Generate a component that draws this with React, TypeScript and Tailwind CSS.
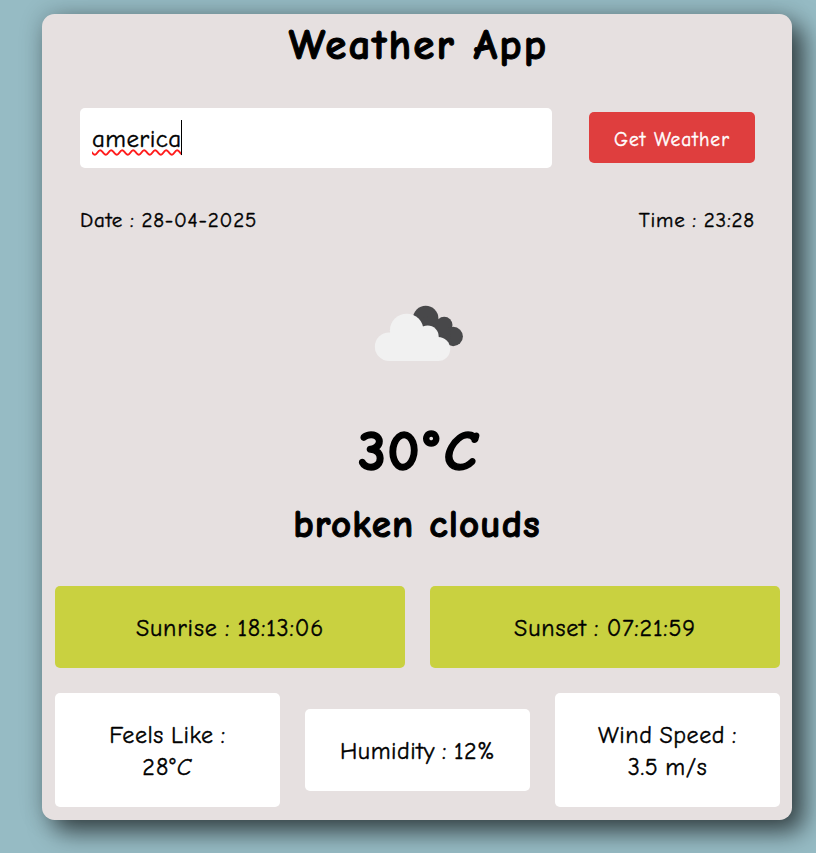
import React from "react";

function CloudIcon() {
  return (
    <svg width="125" height="125" viewBox="0.8 0 125 125" className="block" aria-label="broken clouds">
      <g fill="#48484a">
        <circle cx="71.500" cy="46.500" r="12.700" />
        <circle cx="90" cy="53" r="8.300" />
        <circle cx="99" cy="64.500" r="9.700" />
        <path d="M60 48L78 44L84 47L96 58L97 72L85 72Z" />
      </g>
      <g fill="#f1f1f1">
        <circle cx="35" cy="74.700" r="14.300" />
        <circle cx="52.500" cy="58.500" r="16.800" />
        <circle cx="73.500" cy="64.500" r="11" />
        <circle cx="84" cy="77" r="12" />
        <path d="M35 62H80L84 89H35Z" />
      </g>
    </svg>
  );
}

const card = "flex-1 rounded-[5px] px-3 pt-[26px] pb-[24px] text-center text-[24px] leading-[32px] [word-spacing:-1.5px]";
const sun = `${card} bg-[#c9d140] tracking-[0.85px]`;
const stat = `${card} bg-white tracking-[0.55px]`;

export default function App() {
  return (
    <div className="flex h-[853px] w-full overflow-hidden bg-[#96bbc4] pl-[42px] pt-[14px] font-['Comic_Sans_MS','Comic_Neue','Open_Sans',sans-serif] text-black [-webkit-text-stroke:0.4px]">
      <main className="h-[806px] w-[750px] rounded-[12.5px] bg-[#e6e0e0] shadow-[12px_12px_25px_rgba(0,0,0,0.6),0_0_25px_rgba(0,0,0,0.2)]">
        <h1 className="h-[94px] pl-[3px] text-center text-[43px] font-bold leading-[62px] tracking-[2.1px] [-webkit-text-stroke:1px]">Weather App</h1>
        <div className="flex items-start justify-between pl-[38px] pr-[37px]">
          <div className="flex h-[60px] w-[472px] items-start rounded-[5px] bg-white px-3 pt-3 text-[25px]">
            <span className="pt-px leading-[35px] tracking-[0.4px] underline decoration-[#ff1c1c] decoration-wavy decoration-[1.5px] underline-offset-[2px] [text-decoration-skip-ink:none]">america</span>
            <span className="h-[35px] w-px bg-black" />
          </div>
          <button className="mt-1 h-[51px] w-[166px] rounded-[5px] bg-[#df3e3e] pt-1 text-[19.5px] tracking-[1px] text-white">Get Weather</button>
        </div>
        <div className="flex justify-between pl-[38px] pr-[37px] pt-[39px] text-[21px] leading-[27px] tracking-[0.8px] [word-spacing:-1px]">
          <p>Date : 28-04-2025</p>
          <p>Time : 23:28</p>
        </div>
        <section className="flex h-[352px] flex-col items-center pt-[38px]">
          <CloudIcon />
          <p className="mt-[17px] pl-[2px] text-[56px] font-bold leading-[76px] tracking-[1.5px] [-webkit-text-stroke:1.6px]">30<span className="px-[3px]">°</span><span className="italic">C</span></p>
          <p className="text-[39px] font-bold leading-[70px] tracking-[1.1px] [-webkit-text-stroke:1px]">broken clouds</p>
        </section>
        <div className="flex gap-[25px] pl-[13px] pr-[12px]">
          <div className={sun}>Sunrise : 18:13:06</div>
          <div className={sun}>Sunset : 07:21:59</div>
        </div>
        <div className="mt-[25px] flex items-center gap-[25px] pl-[13px] pr-[12px]">
          <div className={stat}>Feels Like :<br /><span className="tracking-[1.2px]">28°<span className="italic">C</span></span></div>
          <div className={stat}>Humidity : 12%</div>
          <div className={stat}>Wind Speed :<br />3.5 m/s</div>
        </div>
      </main>
    </div>
  );
}
